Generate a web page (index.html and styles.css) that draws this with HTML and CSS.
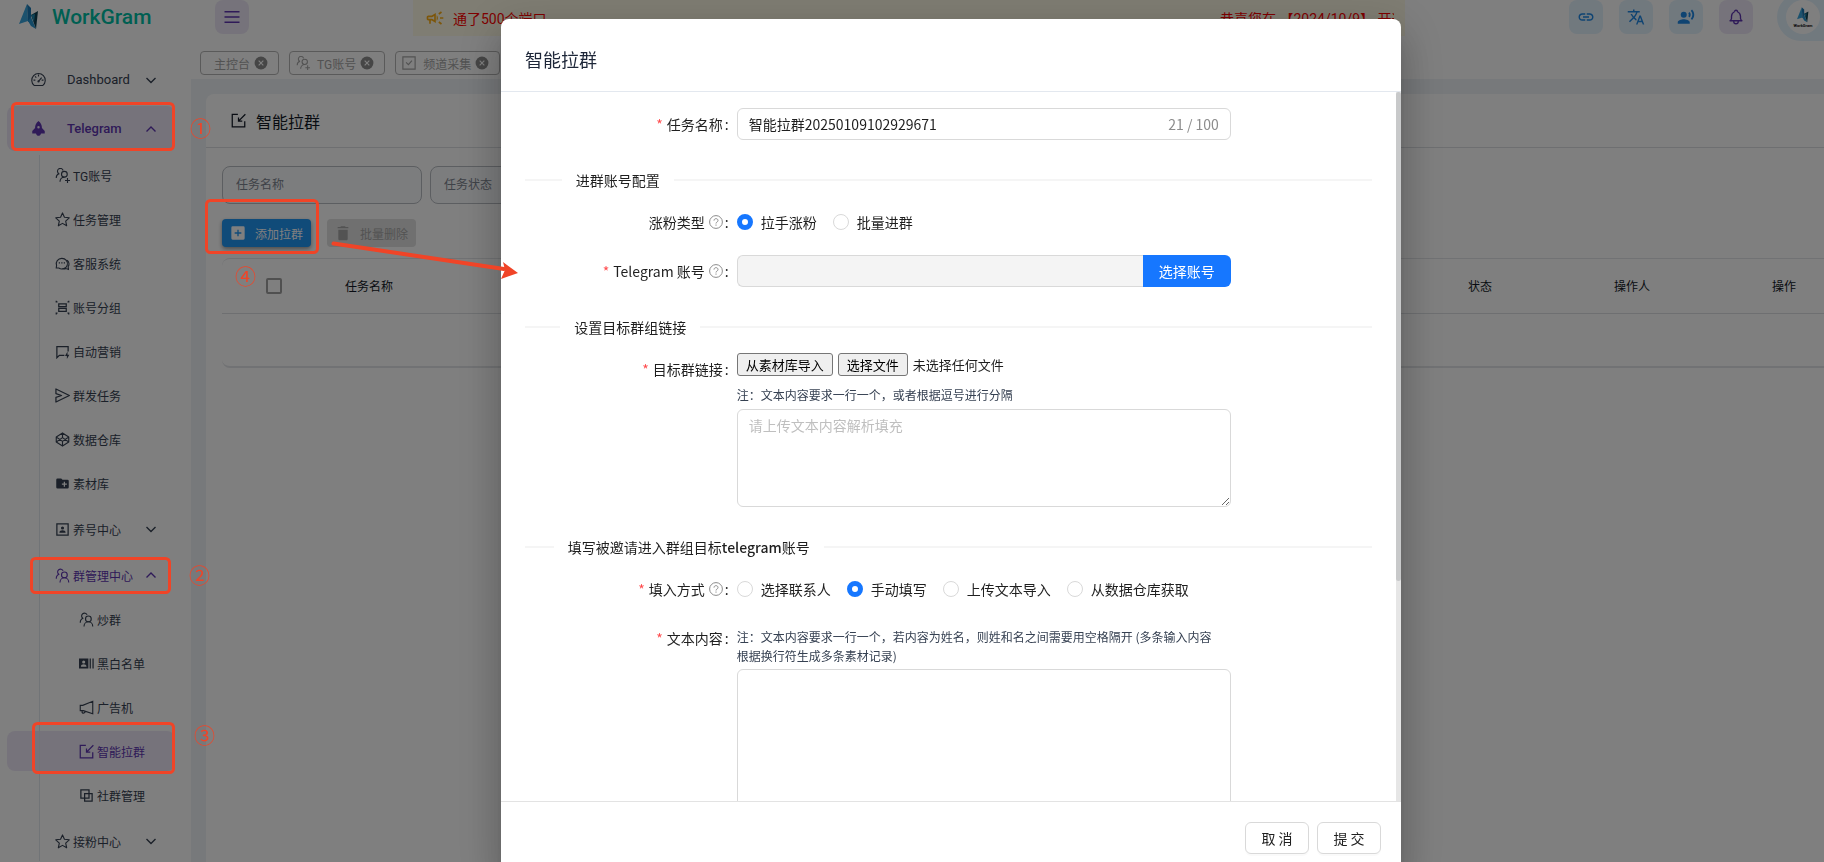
FILE: index.html
```html
<!DOCTYPE html>
<html lang="zh-CN">
<head>
<meta charset="utf-8">
<title>WorkGram - 智能拉群</title>
<link rel="stylesheet" href="styles.css">
</head>
<body>
<svg class="sprite" aria-hidden="true">
  <symbol id="logo" viewBox="0 0 20 26"><path d="M8 0L0 20l9-3z" fill="#38a4dc"/><path d="M8 0l4 4v13l-3 1z" fill="#1b78b4"/><path d="M9 17l3-4 5 12-5-3z" fill="#2694cf"/><path d="M12 11l7-4-2 18z" fill="#0d3f50"/><path d="M12 11l4-1-1 8z" fill="#1f86ad"/></symbol>
  <symbol id="users" viewBox="0 0 24 24"><g fill="none" stroke="currentColor" stroke-width="1.8"><circle cx="15" cy="11" r="4.6"/><path d="M8 23c0-4 3-7.400 7-7.400s7 3.400 7 7.400M13 4.500A4.600 4.600 0 1 0 6 10M2 17c0-3 2-6.300 5-7"/></g></symbol>
  <symbol id="users-plus" viewBox="0 0 24 24"><g fill="none" stroke="currentColor" stroke-width="1.8"><circle cx="15" cy="10" r="4.600"/><path d="M8 22c0-4 3-7.400 7-7.400M13 4A4.600 4.600 0 1 0 6 9M2 16c0-3 2-6.300 5-7M20 16v8M16 20h8"/></g></symbol>
  <symbol id="star" viewBox="0 0 24 24"><path fill="none" stroke="currentColor" stroke-width="1.800" stroke-linejoin="round" d="M12 1.500l3.100 7 7.700.800-5.700 5.200 1.600 7.600L12 18.200l-6.700 3.900 1.600-7.600L1.200 9.300l7.700-.8z"/></symbol>
  <symbol id="chat" viewBox="0 0 24 24"><g fill="none" stroke="currentColor" stroke-width="1.800"><path d="M2 19l.5-4A9 8.500 0 1 1 6 19.300zM19.500 6.500c3.500 3 3.600 8 1.500 10.500l.5 4.500-4-1.500c-2 1-4 1-6 .5"/><path d="M6 11h2m2 0h2m2 0h2"/></g></symbol>
  <symbol id="group" viewBox="0 0 24 24"><g fill="none" stroke="currentColor" stroke-width="2"><path d="M6 6h12v4.500H6zM6 13.500h12V18H6zM1 3h3M2 1v3M20 3h3M22 1v3M1 21h3M2 20v3M20 21h3M22 20v3"/></g></symbol>
  <symbol id="chat-flash" viewBox="0 0 24 24"><path fill="none" stroke="currentColor" stroke-width="2" d="M15 18H7l-4 4V4h18v8"/><path fill="currentColor" d="M20 12l-4 7h3v5l4-7h-3z"/></symbol>
  <symbol id="send" viewBox="0 0 24 24"><path fill="none" stroke="currentColor" stroke-width="2" stroke-linejoin="round" d="M1.500 1.500L23 12 1.500 22.500V15l9-3-9-3z"/></symbol>
  <symbol id="codepen" viewBox="0 0 24 24"><path fill="none" stroke="currentColor" stroke-width="1.800" stroke-linejoin="round" d="M12 1.500L22 8v8l-10 6.500L2 16V8zM2 8l10 7 10-7M2 16l10-7 10 7M12 2v7M12 15v7"/></symbol>
  <symbol id="folder" viewBox="0 0 24 24"><path fill="currentColor" fill-rule="evenodd" d="M20 6h-8l-2-2H4a2 2 0 0 0-2 2v12a2 2 0 0 0 2 2h16a2 2 0 0 0 2-2V8a2 2 0 0 0-2-2zm-1 8h-3v3h-2v-3h-3v-2h3V9h2v3h3z"/></symbol>
  <symbol id="contact" viewBox="0 0 24 24"><path fill="none" stroke="currentColor" stroke-width="2" d="M3 3h18v18H3z"/><circle cx="12" cy="9.500" r="2.500" fill="currentColor"/><path fill="currentColor" d="M7 17c0-5 10-5 10 0z"/></symbol>
  <symbol id="cards" viewBox="0 0 24 24"><path fill="currentColor" fill-rule="evenodd" d="M0 4h15v16H0zm7.500 3a2.500 2.500 0 1 0 0 5 2.500 2.500 0 0 0 0-5zM3 17h9c0-5-9-5-9 0zM17 4h2v16h-2zM21.500 4h2v16h-2z"/></symbol>
  <symbol id="horn" viewBox="0 0 24 24"><path fill="none" stroke="currentColor" stroke-width="1.800" d="M22 2v20L7 17H2V8.500h4zM5 17v3c2 2 4 1 5-1.500"/></symbol>
  <symbol id="import" viewBox="0 0 24 24"><path fill="none" stroke="currentColor" stroke-width="2" d="M11 2H2v20h20v-9M23 2L12 13M12 7v6h6"/></symbol>
  <symbol id="copy" viewBox="0 0 24 24"><path fill="none" stroke="currentColor" stroke-width="2" d="M3 3h13v13H3zM9 9h12v12H9z"/></symbol>
  <symbol id="gauge" viewBox="0 0 24 24"><path fill="none" stroke="currentColor" stroke-width="1.800" d="M5 21.500a10.800 10.800 0 1 1 14 0zM12 15l5-6M12 4v3M4 13h3M17 13h3M6.500 7l2 2"/><circle cx="12" cy="15" r="1.800" fill="currentColor"/></symbol>
  <symbol id="rocket" viewBox="0 0 24 24"><path fill="currentColor" fill-rule="evenodd" d="M12 0c4 3 5.500 7 5.500 11l4.500 5v4h-6c-1 5-7 5-8 0H2v-4l4.500-5c0-4 1.500-8 5.500-11zm0 8a2 2 0 1 0 0 4 2 2 0 0 0 0-4z"/></symbol>
  <symbol id="down" viewBox="0 0 12 12"><path fill="none" stroke="currentColor" stroke-width="1.400" d="M1.500 4L6 8.500 10.500 4"/></symbol>
  <symbol id="up" viewBox="0 0 12 12"><path fill="none" stroke="currentColor" stroke-width="1.400" d="M1.500 8.500L6 4l4.500 4.500"/></symbol>
  <symbol id="menu" viewBox="0 0 24 24"><path fill="none" stroke="currentColor" stroke-width="2" d="M2 5h20M2 12h20M2 19h20"/></symbol>
  <symbol id="campaign" viewBox="0 0 24 24"><path fill="currentColor" fill-rule="evenodd" d="M18 11v2h4v-2h-4zm-2 6.610c.96.710 2.210 1.650 3.200 2.390.4-.530.8-1.070 1.200-1.600-.99-.740-2.240-1.680-3.200-2.400-.4.540-.8 1.080-1.200 1.610zM20.400 5.600c-.4-.530-.8-1.070-1.200-1.600-.99.740-2.240 1.680-3.200 2.400.4.530.8 1.070 1.200 1.600.96-.720 2.210-1.650 3.200-2.400zM4 9c-1.100 0-2 .9-2 2v2c0 1.100.9 2 2 2h1v4h2v-4h1l5 3V6L8 9H4zm5.030 1.710L11 9.530v4.940l-1.970-1.180-.48-.290H4v-2h4.550zM15.500 12c0-1.330-.58-2.530-1.500-3.350v6.690c.92-.81 1.500-2.010 1.500-3.340z"/></symbol>
  <symbol id="check" viewBox="0 0 24 24"><path fill="none" stroke="currentColor" stroke-width="2" d="M1.500 1.500h21v21h-21zM7 11l4 4 6-7"/></symbol>
  <symbol id="close" viewBox="0 0 24 24"><circle cx="12" cy="12" r="11" fill="currentColor"/><path stroke="#fff" stroke-width="2" d="M8 8l8 8M16 8l-8 8"/></symbol>
  <symbol id="link" viewBox="0 0 24 24"><path fill="currentColor" d="M3.900 12c0-1.710 1.390-3.100 3.100-3.100h4V7H7c-2.760 0-5 2.240-5 5s2.240 5 5 5h4v-1.900H7c-1.710 0-3.100-1.390-3.100-3.100zM8 13h8v-2H8v2zm9-6h-4v1.900h4c1.710 0 3.100 1.390 3.100 3.100s-1.390 3.100-3.100 3.100h-4V17h4c2.760 0 5-2.240 5-5s-2.240-5-5-5z"/></symbol>
  <symbol id="translate" viewBox="0 0 24 24"><path fill="currentColor" d="m12.870 15.070-2.540-2.510.03-.03c1.740-1.940 2.980-4.170 3.710-6.530H17V4h-7V2H8v2H1v1.990h11.170C11.500 7.920 10.440 9.750 9 11.350 8.070 10.320 7.300 9.190 6.690 8h-2c.73 1.630 1.730 3.170 2.980 4.560l-5.090 5.020L4 19l5-5 3.110 3.110.76-2.040zM18.500 10h-2L12 22h2l1.120-3h4.750L21 22h2l-4.500-12zm-2.620 7 1.620-4.330L19.120 17h-3.240z"/></symbol>
  <symbol id="voice" viewBox="0 0 24 24"><circle cx="9" cy="9" r="4" fill="currentColor"/><path fill="currentColor" d="M9 15c-2.670 0-8 1.340-8 4v2h16v-2c0-2.660-5.330-4-8-4zm7.760-9.640-1.680 1.690c.84 1.180.84 2.710 0 3.890l1.680 1.690c2.020-2.020 2.020-5.070 0-7.270zM20.070 2l-1.630 1.630c2.770 3.020 2.770 7.560 0 10.740L20.070 16c3.900-3.890 3.910-9.950 0-14z"/></symbol>
  <symbol id="bell" viewBox="0 0 24 24"><path fill="none" stroke="currentColor" stroke-width="1.800" stroke-linejoin="round" d="M10 5a2 2 0 1 1 4 0a7 7 0 0 1 4 6v3a4 4 0 0 0 2 3h-16a4 4 0 0 0 2-3v-3a7 7 0 0 1 4-6M9 17v1a3 3 0 0 0 6 0v-1"/></symbol>
  <symbol id="add" viewBox="0 0 24 24"><path fill="currentColor" fill-rule="evenodd" d="M4 2h16a2 2 0 0 1 2 2v16a2 2 0 0 1-2 2H4a2 2 0 0 1-2-2V4a2 2 0 0 1 2-2zm7 5v4H7v2h4v4h2v-4h4v-2h-4V7z"/></symbol>
  <symbol id="trash" viewBox="0 0 24 24"><path fill="currentColor" d="M5 21c0 1 1 2 2 2h10c1 0 2-1 2-2V7H5zM20 3h-4l-1-1H9L8 3H4v2h16z"/></symbol>
  <symbol id="help" viewBox="0 0 14 14"><circle cx="7" cy="7" r="6.400" fill="none" stroke="currentColor"/><path fill="none" stroke="currentColor" d="M5 5.600c0-2.600 4-2.600 4 0 0 1.400-2 1.400-2 2.900M7 9.500v1.200"/></symbol>
</svg>

<div class="page">
  <aside class="sidebar">
    <a class="brand" href="#"><svg class="brand-mark"><use href="#logo"/></svg>WorkGram</a>
    <nav class="nav">
      <a class="nav-top" href="#"><svg class="icon"><use href="#gauge"/></svg><span class="grow">Dashboard</span><svg class="chev"><use href="#down"/></svg></a>
      <a class="nav-top active" href="#"><svg class="icon"><use href="#rocket"/></svg><span class="grow">Telegram</span><svg class="chev"><use href="#up"/></svg></a>
      <div class="nav-sub">
        <a class="item" href="#"><svg class="icon"><use href="#users-plus"/></svg>TG账号</a>
        <a class="item" href="#"><svg class="icon"><use href="#star"/></svg>任务管理</a>
        <a class="item" href="#"><svg class="icon"><use href="#chat"/></svg>客服系统</a>
        <a class="item" href="#"><svg class="icon"><use href="#group"/></svg>账号分组</a>
        <a class="item" href="#"><svg class="icon"><use href="#chat-flash"/></svg>自动营销</a>
        <a class="item" href="#"><svg class="icon"><use href="#send"/></svg>群发任务</a>
        <a class="item" href="#"><svg class="icon"><use href="#codepen"/></svg>数据仓库</a>
        <a class="item" href="#"><svg class="icon"><use href="#folder"/></svg>素材库</a>
        <a class="item parent" href="#"><svg class="icon"><use href="#contact"/></svg><span class="grow">养号中心</span><svg class="chev"><use href="#down"/></svg></a>
        <a class="item parent open" href="#"><svg class="icon"><use href="#users"/></svg><span class="grow">群管理中心</span><svg class="chev"><use href="#up"/></svg></a>
        <a class="item leaf" href="#"><svg class="icon"><use href="#users"/></svg>炒群</a>
        <a class="item leaf" href="#"><svg class="icon"><use href="#cards"/></svg>黑白名单</a>
        <a class="item leaf" href="#"><svg class="icon"><use href="#horn"/></svg>广告机</a>
        <a class="item leaf active" href="#"><svg class="icon"><use href="#import"/></svg>智能拉群</a>
        <a class="item leaf" href="#"><svg class="icon"><use href="#copy"/></svg>社群管理</a>
        <a class="item parent" href="#"><svg class="icon"><use href="#star"/></svg><span class="grow">接粉中心</span><svg class="chev"><use href="#down"/></svg></a>
      </div>
    </nav>
  </aside>

  <div class="main">
    <header class="topbar">
      <button class="tool violet" aria-label="菜单"><svg class="tool-icon"><use href="#menu"/></svg></button>
      <div class="notice">
        <svg class="notice-icon"><use href="#campaign"/></svg>
        <div class="notice-text"><span>通了500个端口</span><span class="notice-next">恭喜您在 【2024/10/9】 开通</span></div>
      </div>
      <div class="tools">
        <button class="tool blue" aria-label="链接"><svg class="tool-icon"><use href="#link"/></svg></button>
        <button class="tool blue" aria-label="语言"><svg class="tool-icon"><use href="#translate"/></svg></button>
        <button class="tool blue" aria-label="客服"><svg class="tool-icon"><use href="#voice"/></svg></button>
        <button class="tool violet" aria-label="通知"><svg class="tool-icon"><use href="#bell"/></svg></button>
      </div>
      <button class="profile" aria-label="账户"><span class="avatar"><svg class="avatar-mark"><use href="#logo"/></svg><span class="avatar-name">WorkGram</span></span></button>
    </header>
    <div class="tabs">
      <a class="tab plain" href="#">主控台<svg class="tab-close"><use href="#close"/></svg></a>
      <a class="tab" href="#"><svg class="tab-icon"><use href="#users-plus"/></svg>TG账号<svg class="tab-close"><use href="#close"/></svg></a>
      <a class="tab" href="#"><svg class="tab-icon"><use href="#check"/></svg>频道采集<svg class="tab-close"><use href="#close"/></svg></a>
    </div>
    <main class="content">
      <section class="card">
        <h1 class="card-title"><svg class="icon"><use href="#import"/></svg>智能拉群</h1>
        <div class="card-body">
          <div class="filters">
            <input class="filter" type="text" placeholder="任务名称" aria-label="任务名称">
            <input class="filter" type="text" placeholder="任务状态" aria-label="任务状态">
          </div>
          <div class="actions">
            <button class="btn primary"><svg class="btn-icon"><use href="#add"/></svg>添加拉群</button>
            <button class="btn" disabled><svg class="btn-icon"><use href="#trash"/></svg>批量删除</button>
          </div>
          <div class="table-wrap">
            <table class="table">
              <colgroup><col class="c-check"><col class="c-name"><col><col class="c-data"><col class="c-data"><col class="c-data"></colgroup>
              <thead><tr><th><input class="check" type="checkbox" aria-label="全选"></th><th>任务名称</th><th></th><th>状态</th><th>操作人</th><th>操作</th></tr></thead>
              <tbody><tr><td colspan="6"></td></tr></tbody>
            </table>
          </div>
        </div>
      </section>
    </main>
  </div>
</div>

<div class="overlay">
  <div class="dialog" role="dialog" aria-labelledby="dialog-title">
    <h2 class="dialog-title" id="dialog-title">智能拉群</h2>
    <form class="dialog-body">
      <div class="row">
        <label class="label required" for="name">任务名称</label>
        <div class="field text-box"><input id="name" class="text-input" type="text" value="智能拉群20250109102929671" maxlength="100"><span class="count">21 / 100</span></div>
      </div>
      <div class="divider">进群账号配置</div>
      <div class="row">
        <span class="label">涨粉类型<svg class="help"><use href="#help"/></svg></span>
        <div class="field radios">
          <label class="radio"><input type="radio" name="type" checked>拉手涨粉</label>
          <label class="radio"><input type="radio" name="type">批量进群</label>
        </div>
      </div>
      <div class="row">
        <label class="label required" for="account">Telegram 账号<svg class="help"><use href="#help"/></svg></label>
        <div class="field account"><input id="account" class="account-input" type="text" disabled><button class="account-btn" type="button">选择账号</button></div>
      </div>
      <div class="divider">设置目标群组链接</div>
      <div class="row">
        <label class="label required" for="links">目标群链接</label>
        <div class="field">
          <div class="files"><button class="native" type="button">从素材库导入</button><label class="native" for="file">选择文件</label><input id="file" class="file-input" type="file">未选择任何文件</div>
          <p class="note">注：文本内容要求一行一个，或者根据逗号进行分隔</p>
          <textarea id="links" class="area" placeholder="请上传文本内容解析填充"></textarea>
        </div>
      </div>
      <div class="divider">填写被邀请进入群组目标<b>telegram</b>账号</div>
      <div class="row">
        <span class="label required">填入方式<svg class="help"><use href="#help"/></svg></span>
        <div class="field radios">
          <label class="radio"><input type="radio" name="mode">选择联系人</label>
          <label class="radio"><input type="radio" name="mode" checked>手动填写</label>
          <label class="radio"><input type="radio" name="mode">上传文本导入</label>
          <label class="radio"><input type="radio" name="mode">从数据仓库获取</label>
        </div>
      </div>
      <div class="row">
        <label class="label required" for="content">文本内容</label>
        <div class="field">
          <p class="note first">注：文本内容要求一行一个，若内容为姓名，则姓和名之间需要用空格隔开 (多条输入内容根据换行符生成多条素材记录)</p>
          <textarea id="content" class="area tall"></textarea>
        </div>
      </div>
      <div class="scrollbar"><div class="thumb"></div></div>
    </form>
    <footer class="dialog-foot"><button class="foot-btn" type="button">取 消</button><button class="foot-btn" type="button">提 交</button></footer>
  </div>
</div>

<div class="marks">
  <svg class="mark-lines">
    <g fill="none" stroke="#f04427" stroke-width="3"><rect x="12.500" y="103.500" width="161" height="46" rx="4"/><rect x="31.500" y="558.500" width="138" height="34" rx="4"/><rect x="33.500" y="723.500" width="140" height="49" rx="4"/><rect x="206.500" y="200.500" width="111" height="52" rx="4"/></g>
    <path d="M333.500 243.500L504 269" stroke="#f04427" stroke-width="4" stroke-linecap="round"/>
    <path d="M503 262l15 11-17 6 4-9z" fill="#f04427"/>
  </svg>
  <span class="mark m1">①</span><span class="mark m2">②</span><span class="mark m3">③</span><span class="mark m4">④</span>
</div>
</body>
</html>
```
FILE: styles.css
```css
* { box-sizing: border-box; }
body {
  margin: 0;
  height: 100vh;
  overflow: hidden;
  background: #fff;
  color: #364152;
  font-family: Roboto, "Noto Sans CJK SC", sans-serif;
  font-size: 12px;
}
a { color: inherit; text-decoration: none; }
button, input, textarea { font: inherit; }
h1, h2, p { margin: 0; font-weight: 400; }
.sprite { position: absolute; width: 0; height: 0; }
.icon { width: 15px; height: 15px; flex: none; }
.chev { width: 12px; height: 12px; flex: none; }
.grow { flex: 1; }

.page { display: flex; height: 100vh; overflow: hidden; }

/* sidebar */
.sidebar { width: 191px; flex: none; }
.brand {
  display: flex;
  align-items: center;
  gap: 13px;
  height: 34px;
  padding-left: 19px;
  color: #00bfa5;
  font-size: 21px;
  font-weight: 500;
}
.brand-mark { width: 20px; height: 26px; }
.nav { padding: 23px 16px 0 7px; }
.nav-top {
  display: flex;
  align-items: center;
  height: 45px;
  margin-bottom: 4px;
  padding: 0 18px 0 24px;
  border-radius: 8px;
  font-size: 13px;
}
.nav-top .icon { margin-right: 21px; }
.nav-top.active, .item.active { background: #ede7f6; color: #5e35b1; }
.nav-top.active { font-weight: 500; }
.nav-sub { position: relative; }
.nav-sub::before {
  content: "";
  position: absolute;
  top: 0;
  bottom: 0;
  left: 32px;
  width: 1px;
  background: #e3e8ef;
}
.item {
  display: flex;
  align-items: center;
  gap: 3px;
  height: 40px;
  margin-bottom: 4px;
  padding: 0 18px 0 48px;
  border-radius: 8px;
}
.parent { margin-top: 6px; }
.open { color: #5e35b1; }
.leaf { padding-left: 72px; }

/* top bar */
.main { flex: 1; min-width: 0; display: flex; flex-direction: column; }
.topbar { display: flex; height: 51px; padding-left: 24px; }
.tool {
  display: flex;
  align-items: center;
  justify-content: center;
  width: 34px;
  height: 34px;
  padding: 0;
  border: 0;
  border-radius: 8px;
}
.tool-icon { width: 18px; height: 18px; }
.violet { background: #ede7f6; color: #5e35b1; }
.blue { background: #e3f2fd; color: #1e88e5; }
.notice {
  flex: 1;
  min-width: 0;
  display: flex;
  align-items: center;
  height: 36px;
  margin: 0 164px;
  padding: 0 11px 0 12px;
  gap: 8px;
  background: #fffbe6;
}
.notice-icon { width: 20px; height: 20px; color: #faad14; flex: none; }
.notice-text {
  flex: 1;
  display: flex;
  justify-content: space-between;
  overflow: hidden;
  white-space: nowrap;
  color: #f00;
  font-size: 14px;
}
.notice-next { width: 174px; overflow: hidden; }
.tools { display: flex; gap: 16px; }
.profile {
  width: 47px;
  height: 48px;
  margin: -7px 0 0 24px;
  padding: 0 0 0 9px;
  border: 0;
  border-radius: 24px 0 0 24px;
  background: #e3f2fd;
}
.avatar {
  display: flex;
  flex-direction: column;
  align-items: center;
  justify-content: center;
  width: 34px;
  height: 34px;
  border-radius: 50%;
  background: #fff;
}
.avatar-mark { width: 12px; height: 16px; }
.avatar-name { font-size: 4px; font-weight: 700; line-height: 5px; color: #111; }
.tabs { display: flex; gap: 10px; padding: 0 0 4px 9px; }
.tab {
  display: flex;
  align-items: center;
  gap: 4px;
  height: 24px;
  padding: 0 10px 0 6px;
  border: 1px solid #b4b4b4;
  border-radius: 4px;
  color: #a4a4a4;
}
.tab.plain { padding-left: 13px; }
.tab-icon { width: 14px; height: 14px; margin-right: 3px; }
.tab-close { width: 14px; height: 14px; color: #8c8c8c; }

/* list card */
.content { flex: 1; padding: 15px 0 0 15px; background: #eef2f6; }
.card { height: 100%; border-radius: 8px 0 0 0; background: #fff; }
.card-title {
  display: flex;
  align-items: center;
  gap: 10px;
  height: 54px;
  padding-left: 25px;
  border-bottom: 1px solid #dcdfe3;
  color: #121926;
  font-size: 16px;
}
.card-body { padding: 18px 0 0 16px; }
.filters { display: flex; gap: 8px; }
.filter {
  width: 200px;
  height: 38px;
  padding: 0 13px;
  border: 1px solid #b8bcc2;
  border-radius: 8px;
  background: #f8fafc;
}
.filter::placeholder { color: #7d8590; opacity: 1; }
.actions { display: flex; gap: 16px; margin: 15px 0 11px; }
.btn {
  display: flex;
  align-items: center;
  gap: 9px;
  height: 28px;
  padding: 0 8px;
  border: 0;
  border-radius: 4px;
  background: #e0e0e0;
  color: #a6a6a6;
}
.btn-icon { width: 16px; height: 16px; }
.btn.primary { background: #2196f3; color: #fff; box-shadow: 0 2px 4px rgba(0, 0, 0, .4); }
.table-wrap {
  overflow: hidden;
  border: 1px solid #e3e5e8;
  border-width: 1px 0 2px;
  border-radius: 8px 0 0 8px;
}
.table { width: calc(100% + 36px); table-layout: fixed; border-collapse: collapse; color: #121926; }
.table th { height: 54px; padding: 0; border-bottom: 1px solid #dcdfe3; font-weight: 400; }
.table td { height: 53px; padding: 0; }
.c-check { width: 103px; }
.c-name { width: 88px; }
.c-data { width: 152px; }
.check {
  appearance: none;
  display: block;
  width: 16px;
  height: 16px;
  margin: 0 auto;
  border: 2px solid #a0a0a0;
  border-radius: 2px;
}

/* dialog */
.overlay {
  position: fixed;
  inset: 0;
  display: flex;
  justify-content: center;
  padding: 19px 0 0 78px;
  background: rgba(0, 0, 0, .5);
  font-family: "Noto Sans CJK SC", sans-serif;
  font-size: 14px;
  color: #1f1f1f;
}
.dialog {
  display: flex;
  flex-direction: column;
  width: 900px;
  height: calc(100vh - 7px);
  flex: none;
  border-radius: 8px;
  background: #fff;
  box-shadow: 0 11px 15px -7px rgba(0, 0, 0, .2), 0 24px 38px 3px rgba(0, 0, 0, .14), 0 9px 46px 8px rgba(0, 0, 0, .12);
}
.dialog-title {
  padding: 28px 24px 20px;
  border-bottom: 1px solid #e3e8ef;
  color: #1d2638;
  font-size: 18px;
  line-height: 24px;
}
.dialog-body {
  position: relative;
  flex: 1;
  min-height: 0;
  overflow: hidden;
  padding: 16px 29px 0 24px;
}
.row { display: grid; grid-template-columns: 6fr 14fr 4fr; margin-bottom: 17px; }
.label {
  display: flex;
  align-items: center;
  justify-content: flex-end;
  height: 32px;
  padding-right: 8px;
}
.label::after { content: ":"; margin-left: 2px; }
.required::before { content: "*"; margin-right: 4px; color: #ff4d4f; }
.help { width: 14px; height: 14px; margin-left: 4px; color: #8c8c8c; }
.field { min-width: 0; }
.text-box {
  display: flex;
  align-items: center;
  height: 32px;
  padding: 0 11px;
  border: 1px solid #d9d9d9;
  border-radius: 6px;
}
.text-input { flex: 1; min-width: 0; padding: 0; border: 0; outline: 0; color: #1f1f1f; }
.count { color: #8c8c8c; }
.divider {
  display: flex;
  align-items: center;
  margin: 29px 0 15px;
  line-height: 22px;
  white-space: nowrap;
}
.divider::before, .divider::after { content: ""; height: 2px; background: #f5f5f5; }
.divider::before { flex: 5; margin-right: 14px; }
.divider::after { flex: 95; margin-left: 14px; }
.divider b { font-weight: 500; }
.radios { display: flex; align-items: center; gap: 16px; height: 32px; }
.radio { display: flex; align-items: center; gap: 8px; white-space: nowrap; }
.radio input {
  appearance: none;
  width: 16px;
  height: 16px;
  margin: 0;
  border: 1px solid #d9d9d9;
  border-radius: 50%;
  background: #fff;
}
.radio input:checked { border: 5px solid #1677ff; }
.account { display: flex; height: 32px; }
.account-input {
  flex: 1;
  min-width: 0;
  border: 1px solid #d9d9d9;
  border-right: 0;
  border-radius: 6px 0 0 6px;
  background: #f4f4f4;
}
.account-btn {
  width: 88px;
  padding: 0;
  border: 0;
  border-radius: 0 6px 6px 0;
  background: #1677ff;
  color: #fff;
}
.files { position: relative; display: flex; align-items: center; gap: 5px; height: 23px; font-size: 13px; }
.native {
  height: 23px;
  padding: 0 8px;
  border: 1px solid #767676;
  border-radius: 3px;
  background: #efefef;
  color: #000;
  font-size: 13px;
  line-height: 21px;
}
.file-input { position: absolute; width: 1px; height: 1px; opacity: 0; }
.note { margin: 9px 0 5px; padding-right: 12px; color: #364152; font-size: 12px; line-height: 19px; }
.note.first { margin: 5px 0 4px; }
.area {
  display: block;
  width: 100%;
  height: 98px;
  padding: 4px 11px;
  border: 1px solid #d9d9d9;
  border-radius: 6px;
  line-height: 22px;
}
.area.tall { height: 180px; }
.area::placeholder { color: #bfbfbf; opacity: 1; }
.scrollbar { position: absolute; top: 0; right: 0; bottom: 0; width: 5px; background: #e6e6e6; }
.thumb { height: 69%; border-radius: 3px; background: #c8c9ca; }
.dialog-foot {
  display: flex;
  justify-content: flex-end;
  gap: 8px;
  padding: 20px;
  border-top: 1px solid #e3e3e3;
}
.foot-btn {
  width: 64px;
  height: 32px;
  padding: 0;
  border: 1px solid #d9d9d9;
  border-radius: 6px;
  background: #fff;
  color: #1f1f1f;
  box-shadow: 0 2px 0 rgba(0, 0, 0, .02);
}

/* step annotations */
.marks { position: absolute; inset: 0; pointer-events: none; font-family: "Noto Sans CJK SC", sans-serif; }
.mark-lines { width: 100%; height: 100%; }
.mark { position: absolute; color: #f04427; font-size: 21px; line-height: 22px; }
.m1 { left: 190px; top: 116px; }
.m2 { left: 189px; top: 563px; }
.m3 { left: 194px; top: 723px; }
.m4 { left: 235px; top: 264px; }
```
